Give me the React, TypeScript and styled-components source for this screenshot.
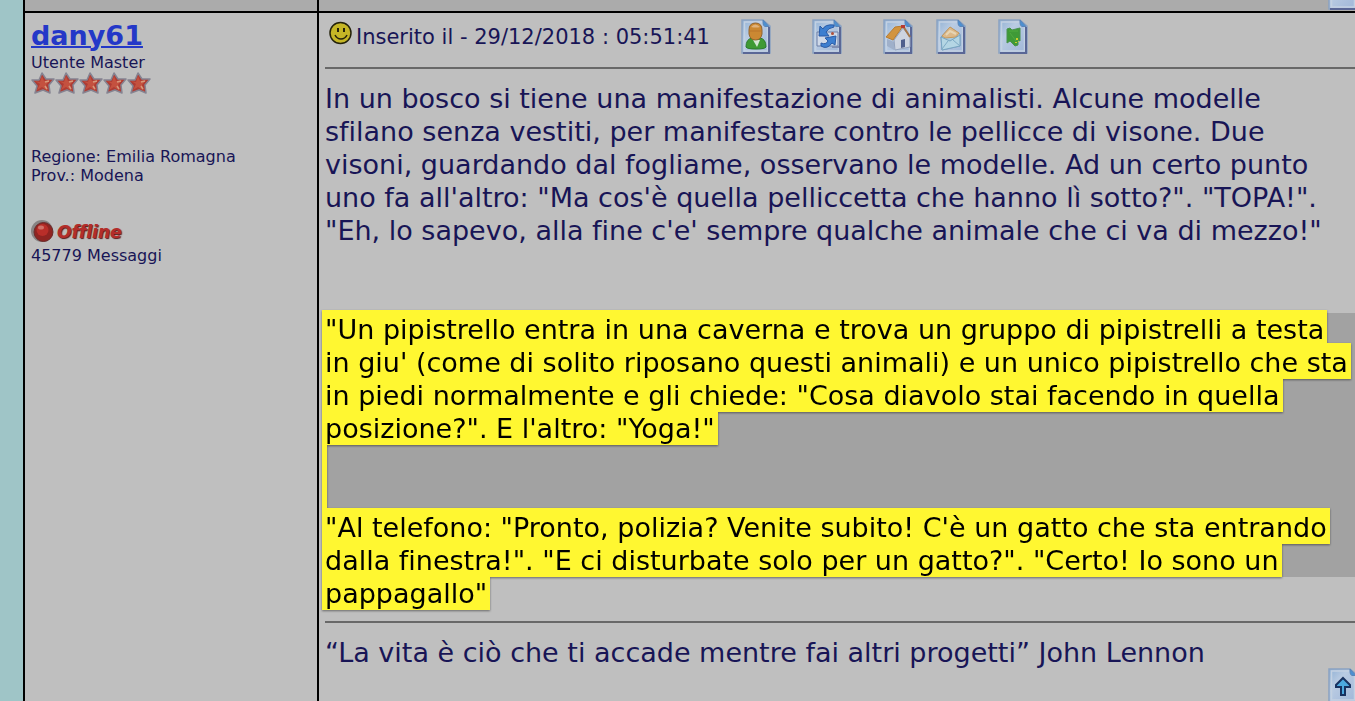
import React from "react";
import styled, { createGlobalStyle } from "styled-components";

const GlobalStyle = createGlobalStyle`
  body {
    margin: 0;
    overflow: hidden;
    background: #9fc5c7;
    color: #181556;
    font-family: Verdana, "DejaVu Sans", sans-serif;
    font-variant-ligatures: none;
  }
`;

const Page = styled.main`
  display: flex;
  flex-direction: column;
  min-height: 100vh;
  margin-left: 23px;
  background: #bfbfbf;
  border-left: 2px solid #000;
  box-sizing: border-box;
`;

const Row = styled.div<{ $grow?: boolean }>`
  display: grid;
  grid-template-columns: 292px minmax(0, 1fr);
  flex: ${(p) => (p.$grow ? "1 0 auto" : "0 0 auto")};
`;

const PreviousCell = styled.div<{ $last?: boolean }>`
  display: flex;
  align-items: flex-end;
  justify-content: flex-end;
  height: 11px;
  overflow: hidden;
  background: #ababab;
  border-bottom: 2px solid #000;
  border-left: ${(p) => (p.$last ? "2px solid #000" : "0")};
`;

const UserCell = styled.aside`
  padding: 6px;
  font-size: 16px;
  line-height: 19px;
`;

const UserName = styled.a`
  display: block;
  width: max-content;
  font-size: 27px;
  line-height: 34px;
  font-weight: bold;
  color: #2438c8;
  text-decoration-thickness: 2px;
`;

const Stars = styled.div`
  display: flex;
  height: 24px;
  margin-bottom: 51px;
`;

const Status = styled.div`
  display: flex;
  align-items: center;
  gap: 2px;
  height: 26px;
  margin: 34px 0 1px;
  font-size: 17px;
  font-weight: bold;
  font-style: italic;
  color: #b32d2a;
  text-shadow: 1px 1px 1px #5a1a1a;
`;

const PostCell = styled.article`
  display: flex;
  flex-direction: column;
  min-width: 0;
  overflow: hidden;
  padding-left: 6px;
  border-left: 2px solid #000;
  font-size: 27px;
  line-height: 33px;
  white-space: nowrap;
`;

const PostHead = styled.header`
  display: flex;
  align-items: center;
  height: 48px;
  padding: 0 0 6px 4px;
  border-bottom: 2px solid #686868;
  font-size: 21px;
`;

const FaceSlot = styled.span`
  display: flex;
  height: 32px;
`;

const PostedAt = styled.time`
  width: 385px;
  margin-left: 3px;
`;

const Tools = styled.nav`
  display: flex;
`;

const IconLink = styled.a<{ $gap?: number }>`
  display: block;
  height: 36px;
  margin-right: ${(p) => p.$gap ?? 0}px;
`;

const Body = styled.p`
  margin: 13px 0 66px;
`;

const Selection = styled.section`
  background: linear-gradient(#a2a2a2, #a2a2a2) 0 0 / 100% 264px no-repeat;
`;

const Highlights = styled.div`
  filter: drop-shadow(0 1px 1px rgba(0, 0, 0, 0.45));
`;

const Mark = styled.mark`
  display: block;
  width: max-content;
  height: 33px;
  margin-left: -3px;
  padding: 0 3px;
  background: #fff731;
  color: #000;
  box-shadow: 0 -3px #fff731;
`;

const EmptyMark = styled.div`
  width: 5px;
  height: 66px;
  margin-left: -3px;
  background: #fff731;
`;

const Signature = styled.footer`
  margin-top: 11px;
  padding-top: 13px;
  border-top: 2px solid #686868;
`;

const TopLink = styled.a`
  display: block;
  height: 36px;
  align-self: flex-end;
  margin: -1px -3px 0 0;
`;

function Sheet({ children }: { children?: React.ReactNode }) {
  return (
    <svg width="30" height="36" viewBox="0 0 30 36">
      <defs>
        <linearGradient id="paper" x1="0" y1="0" x2="1" y2="1">
          <stop offset="0" stopColor="#8fb0d4" />
          <stop offset=".35" stopColor="#b9cbe2" />
          <stop offset="1" stopColor="#9fb6d8" />
        </linearGradient>
      </defs>
      <path d="M1 1H22L29 7V34H1Z" fill="url(#paper)" stroke="#8aa2c2" strokeWidth="1.5" />
      <path d="M3.5 3H21L26.5 8V32H3.5Z" fill="none" stroke="#c3d1e2" strokeWidth="1.5" />
      <path d="M28 8V34H2" fill="none" stroke="#5a6796" strokeWidth="2" />
      <path d="M22 1L28 7.5H24Q22 7 22 4Z" fill="#4a90d2" stroke="#5b84b8" strokeWidth="1" />
      {children}
    </svg>
  );
}

const ProfileIcon = () => (
  <Sheet>
    <path d="M5 28Q5 20 11 19L15 22L19 19Q25 20 25 28Q24 30 15 30Q6 30 5 28Z" fill="#3f9a35" stroke="#2c7a2c" />
    <path d="M12 21H19L16 28Z" fill="#d5e7d5" />
    <path d="M8 11Q8 4 14.500 4Q21 4 21 11V15Q20 21 14.500 21Q9 21 8 15Z" fill="#cb8832" stroke="#8f622f" />
    <path d="M10 8Q14 3 19 8Q15 9 10 8" fill="#dfb27c" />
    <path d="M9 12H20" stroke="#b9752a" />
  </Sheet>
);

const ForwardIcon = () => (
  <Sheet>
    <path d="M5 13H26V27H5Z" fill="#cfd9e8" stroke="#6c7fa6" />
    <path d="M20 28H27" stroke="#7f8db0" strokeWidth="2" />
    <path d="M22 6Q13 5 11 10L8 7L7 17H17L14 13Q16 9 22 8Z" fill="#3d7fd0" stroke="#2a5ba6" />
    <path d="M9 24Q14 26 16 22L13 19L24 17L23 26L20 24Q15 31 9 27Z" fill="#3d7fd0" stroke="#2a5ba6" />
    <circle cx="20.500" cy="14.500" r="1.500" fill="#b0503a" />
  </Sheet>
);

const HomeIcon = () => (
  <Sheet>
    <path d="M4 20L11 23V31L4 27Z" fill="#9fb0ca" />
    <path d="M11 21L20 9L27 18V28L12 31Z" fill="#cdd4e0" stroke="#93a2bc" />
    <path d="M3 18L12 8L20 7L10 21Z" fill="#d2943f" stroke="#b87c30" />
    <path d="M20 7L27 18" stroke="#a5774a" strokeWidth="2" />
    <path d="M18 21L22 20V28L18 29Z" fill="#4f5f8d" />
    <path d="M18 6H22V9H18Z" fill="#b63b31" />
  </Sheet>
);

const MailIcon = () => (
  <Sheet>
    <path d="M5 18L14 8L24 15V27L6 31Z" fill="#a9cadd" stroke="#7d9cbc" />
    <path d="M6 17L14 8L23 14L20 18L9 19Z" fill="#dcb98a" stroke="#c79a5c" />
    <path d="M10 16L14 12L20 15" fill="none" stroke="#e6d5b4" strokeWidth="2" />
    <path d="M5 18L14 22L24 16V27L6 31Z" fill="#b4d6e4" stroke="#78a5c2" />
    <path d="M6 30L12 22M24 27L17 21" stroke="#7eabc6" />
  </Sheet>
);

const QuoteIcon = () => (
  <Sheet>
    <path d="M9 10L12 9L14 11L22 9V22L20 21L20 26L17 27L14 24L12 22L9 24Z" fill="#3f9a37" stroke="#4b9150" />
    <path d="M11 12H20M12 14L18 22" stroke="#51ab40" />
    <path d="M18 19h2v2h-2zM20 22h1v1h-1zM17 23h2v1h-2z" fill="#c9d12c" />
  </Sheet>
);

const UpIcon = () => (
  <Sheet>
    <path d="M15 10L22 17V19H17V27H13V19H8V17Z" fill="#4ca9df" stroke="#183260" strokeWidth="2" />
  </Sheet>
);

const Smiley = () => (
  <svg width="24" height="24" viewBox="0 0 24 24" role="img" aria-label="Sorriso">
    <circle cx="11.500" cy="12" r="10.500" fill="#c5b626" stroke="#24220b" strokeWidth="1.500" />
    <path d="M8 7h2v4H8zM14 7h2v4h-2z" fill="#25220c" />
    <path d="M6 14Q8 18 12 18Q16 18 18 14" fill="none" stroke="#25220c" strokeWidth="1.500" />
  </svg>
);

const Star = () => (
  <svg width="24" height="24" viewBox="0 0 24 24" aria-hidden="true">
    <path d="M11 1L15 7L23 7L18 13L19 21L12 18L4 21L6 14L1 8L8 8Z" fill="#ae3c34" stroke="#858391" strokeWidth="1.500" strokeLinejoin="round" />
    <path d="M11 4L13 9L19 8L15 13L17 19L11 15L6 18L9 12L4 9L9 10Z" fill="#c4513f" />
    <path d="M14 10L18 9M14 14L16 17" stroke="#d69a7c" strokeWidth="1.500" fill="none" />
  </svg>
);

const Bulb = () => (
  <svg width="24" height="26" viewBox="0 0 24 26" aria-hidden="true">
    <circle cx="11" cy="12" r="11" fill="#878383" />
    <circle cx="12.500" cy="13" r="9.500" fill="#8f2421" stroke="#6b2c2c" />
    <circle cx="11.500" cy="11" r="6" fill="#b92e29" />
    <ellipse cx="10" cy="8.500" rx="3" ry="2" fill="#cf7168" />
  </svg>
);

const plainLines = [
  "In un bosco si tiene una manifestazione di animalisti. Alcune modelle",
  "sfilano senza vestiti, per manifestare contro le pellicce di visone. Due",
  "visoni, guardando dal fogliame, osservano le modelle. Ad un certo punto",
  "uno fa all'altro: \"Ma cos'è quella pelliccetta che hanno lì sotto?\". \"TOPA!\".",
  "\"Eh, lo sapevo, alla fine c'e' sempre qualche animale che ci va di mezzo!\"",
];

const batLines = [
  "\"Un pipistrello entra in una caverna e trova un gruppo di pipistrelli a testa",
  "in giu' (come di solito riposano questi animali) e un unico pipistrello che sta",
  "in piedi normalmente e gli chiede: \"Cosa diavolo stai facendo in quella",
  "posizione?\". E l'altro: \"Yoga!\"",
];

const phoneLines = [
  "\"Al telefono: \"Pronto, polizia? Venite subito! C'è un gatto che sta entrando",
  "dalla finestra!\". \"E ci disturbate solo per un gatto?\". \"Certo! Io sono un",
  "pappagallo\"",
];

const marked = (lines: string[]) => lines.map((text) => <Mark key={text}>{text}</Mark>);

export default function App() {
  return (
    <>
      <GlobalStyle />
      <Page>
        <Row>
          <PreviousCell />
          <PreviousCell $last>
            <TopLink href="#top" aria-label="Torna su">
              <Sheet />
            </TopLink>
          </PreviousCell>
        </Row>
        <Row $grow>
          <UserCell>
            <UserName href="#dany61">dany61</UserName>
            <div>Utente Master</div>
            <Stars>
              {[1, 2, 3, 4, 5].map((n) => (
                <Star key={n} />
              ))}
            </Stars>
            <div>Regione: Emilia Romagna</div>
            <div>Prov.: Modena</div>
            <Status>
              <Bulb />
              Offline
            </Status>
            <div>45779 Messaggi</div>
          </UserCell>
          <PostCell>
            <PostHead>
              <FaceSlot>
                <Smiley />
              </FaceSlot>
              <PostedAt dateTime="2018-12-29T05:51:41">Inserito il - 29/12/2018 : 05:51:41</PostedAt>
              <Tools>
                <IconLink $gap={41} href="#profilo" aria-label="Profilo"><ProfileIcon /></IconLink>
                <IconLink $gap={41} href="#messaggio" aria-label="Messaggio privato"><ForwardIcon /></IconLink>
                <IconLink $gap={23} href="#home" aria-label="Homepage"><HomeIcon /></IconLink>
                <IconLink $gap={32} href="#email" aria-label="Email"><MailIcon /></IconLink>
                <IconLink href="#cita" aria-label="Cita"><QuoteIcon /></IconLink>
              </Tools>
            </PostHead>
            <Body>
              {plainLines.map((text) => (
                <React.Fragment key={text}>
                  {text}
                  <br />
                </React.Fragment>
              ))}
            </Body>
            <Selection>
              <Highlights>
                {marked(batLines)}
                <EmptyMark />
                {marked(phoneLines)}
              </Highlights>
            </Selection>
            <Signature>“La vita è ciò che ti accade mentre fai altri progetti” John Lennon</Signature>
            <TopLink href="#top" aria-label="Torna su"><UpIcon /></TopLink>
          </PostCell>
        </Row>
      </Page>
    </>
  );
}
